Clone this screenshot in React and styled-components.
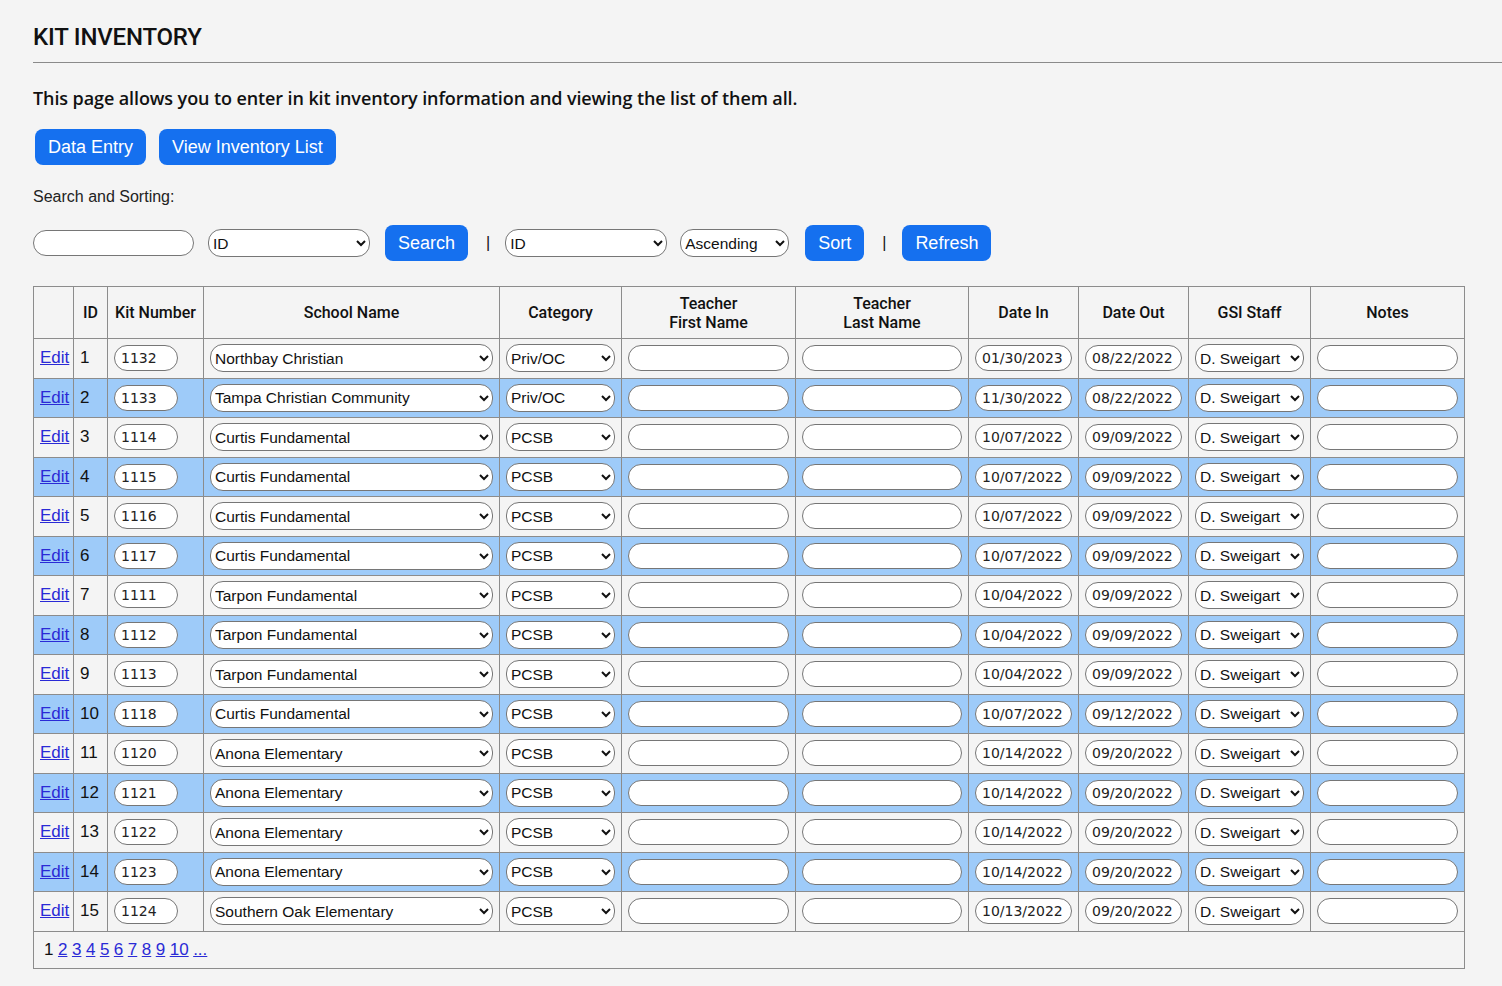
import styled, { createGlobalStyle } from 'styled-components'

const GlobalStyle = createGlobalStyle`
  html, body {
    margin: 0;
    background: #f4f4f4;
    color: #111;
    font-family: "Liberation Sans", Arial, sans-serif;
  }
`

const Page = styled.div`
  padding: 0 0 17px 33px;
`

const Title = styled.h1`
  margin: 0;
  padding-top: 22px;
  font-family: Roboto, "Liberation Sans", sans-serif;
  font-weight: 500;
  font-size: 24px;
  line-height: 30px;
  letter-spacing: -0.2px;
`

const Rule = styled.hr`
  margin: 10px 0 0;
  border: 0;
  border-top: 1px solid #8a8a8a;
`

const Intro = styled.p`
  margin: 22px 0 0;
  font-family: "Open Sans", "Liberation Sans", sans-serif;
  font-weight: 600;
  font-size: 18px;
  line-height: 26px;
  letter-spacing: -0.1px;
  color: #111;
`

const NavRow = styled.div`
  display: flex;
  gap: 13px;
  margin: 18px 0 0 2px;
`

const Button = styled.button`
  height: 36px;
  padding: 0 13px;
  border: 0;
  border-radius: 8px;
  background: #1570ef;
  color: #fff;
  font-family: "Liberation Sans", Arial, sans-serif;
  font-size: 18px;
  cursor: pointer;
`

const Label = styled.div`
  margin-top: 22px;
  font-size: 16px;
  line-height: 20px;
  color: #222;
`

const Controls = styled.div`
  display: flex;
  align-items: center;
  margin-top: 18px;
  height: 36px;
`

const Pipe = styled.span`
  font-size: 16px;
  margin: 0 ${(p) => p.$right}px 0 ${(p) => p.$left}px;
`

const pill = `
  box-sizing: border-box;
  height: 26px;
  border: 1px solid #767676;
  border-radius: 13px;
  background: #fff;
  color: #222;
`

const TextBox = styled.input`
  ${pill}
  width: ${(p) => p.$w || '100%'};
  margin-right: ${(p) => p.$mr || 0}px;
  padding: 0 6px;
  font-family: "DejaVu Sans", Verdana, sans-serif;
  font-size: 14px;
  outline: none;
`

const Select = styled.select`
  ${pill}
  height: 28px;
  width: ${(p) => p.$w || '100%'};
  margin-right: ${(p) => p.$mr || 0}px;
  padding: 0 2px 0 0;
  font-family: "Liberation Sans", Arial, sans-serif;
  font-size: 15.5px;
  color: #111;
`

const Table = styled.table`
  margin-top: 25px;
  width: 1431px;
  table-layout: fixed;
  border-collapse: collapse;
  border: 1px solid #8c8c8c;
`

const Th = styled.th`
  height: 51px;
  padding: 0 4px;
  border: 1px solid #8c8c8c;
  font-family: Roboto, "Liberation Sans", sans-serif;
  font-weight: 500;
  font-size: 16px;
  line-height: 19px;
  text-align: center;
  vertical-align: middle;
`

const Row = styled.tr`
  height: 39.5px;
  background: ${(p) => (p.$alt ? '#9ecbf9' : '#f4f4f4')};
`

const Td = styled.td`
  padding: 0 6px;
  border: 1px solid #8c8c8c;
  font-size: 17px;
  vertical-align: middle;
`

const EditLink = styled.a`
  color: #2a2ad6;
  text-decoration: underline;
  font-size: 17px;
`

const PagerCell = styled.td`
  height: 36px;
  padding: 0 10px;
  border: 1px solid #8c8c8c;
  font-size: 17px;
  background: #f4f4f4;
`

const PageLink = styled.a`
  color: #2a2ad6;
  text-decoration: underline;
  margin-left: 4.5px;
`

const schools = [
  'Northbay Christian',
  'Tampa Christian Community',
  'Curtis Fundamental',
  'Curtis Fundamental',
  'Curtis Fundamental',
  'Curtis Fundamental',
  'Tarpon Fundamental',
  'Tarpon Fundamental',
  'Tarpon Fundamental',
  'Curtis Fundamental',
  'Anona Elementary',
  'Anona Elementary',
  'Anona Elementary',
  'Anona Elementary',
  'Southern Oak Elementary',
]
const kits = ['1132', '1133', '1114', '1115', '1116', '1117', '1111', '1112', '1113', '1118', '1120', '1121', '1122', '1123', '1124']
const datesIn = ['01/30/2023', '11/30/2022', '10/07/2022', '10/07/2022', '10/07/2022', '10/07/2022', '10/04/2022', '10/04/2022', '10/04/2022', '10/07/2022', '10/14/2022', '10/14/2022', '10/14/2022', '10/14/2022', '10/13/2022']
const datesOut = ['08/22/2022', '08/22/2022', '09/09/2022', '09/09/2022', '09/09/2022', '09/09/2022', '09/09/2022', '09/09/2022', '09/09/2022', '09/12/2022', '09/20/2022', '09/20/2022', '09/20/2022', '09/20/2022', '09/20/2022']

const rows = kits.map((kit, i) => ({
  id: i + 1,
  kit,
  school: schools[i],
  category: i < 2 ? 'Priv/OC' : 'PCSB',
  dateIn: datesIn[i],
  dateOut: datesOut[i],
}))

const widths = [40, 34, 96, 296, 122, 174, 173, 110, 110, 122, 154]

export default function App() {
  return (
    <Page>
      <GlobalStyle />
      <Title>KIT INVENTORY</Title>
      <Rule />
      <Intro>This page allows you to enter in kit inventory information and viewing the list of them all.</Intro>
      <NavRow>
        <Button>Data Entry</Button>
        <Button>View Inventory List</Button>
      </NavRow>
      <Label>Search and Sorting:</Label>
      <Controls>
        <TextBox $w="161px" $mr={14} />
        <Select $w="162px" $mr={15} defaultValue="ID">
          <option>ID</option>
        </Select>
        <Button>Search</Button>
        <Pipe $left={18} $right={15}>|</Pipe>
        <Select $w="162px" $mr={13} defaultValue="ID">
          <option>ID</option>
        </Select>
        <Select $w="109px" $mr={16} defaultValue="Ascending">
          <option>Ascending</option>
          <option>Descending</option>
        </Select>
        <Button>Sort</Button>
        <Pipe $left={18} $right={16}>|</Pipe>
        <Button>Refresh</Button>
      </Controls>
      <Table>
        <colgroup>
          {widths.map((w, i) => (
            <col key={i} style={{ width: w }} />
          ))}
        </colgroup>
        <thead>
          <tr>
            <Th />
            <Th>ID</Th>
            <Th>Kit Number</Th>
            <Th>School Name</Th>
            <Th>Category</Th>
            <Th>Teacher<br />First Name</Th>
            <Th>Teacher<br />Last Name</Th>
            <Th>Date In</Th>
            <Th>Date Out</Th>
            <Th>GSI Staff</Th>
            <Th>Notes</Th>
          </tr>
        </thead>
        <tbody>
          {rows.map((r, i) => (
            <Row key={r.id} $alt={i % 2 === 1}>
              <Td><EditLink href="#">Edit</EditLink></Td>
              <Td>{r.id}</Td>
              <Td><TextBox $w="64px" defaultValue={r.kit} /></Td>
              <Td><Select defaultValue={r.school}><option>{r.school}</option></Select></Td>
              <Td><Select defaultValue={r.category}><option>{r.category}</option></Select></Td>
              <Td><TextBox /></Td>
              <Td><TextBox /></Td>
              <Td><TextBox defaultValue={r.dateIn} /></Td>
              <Td><TextBox defaultValue={r.dateOut} /></Td>
              <Td><Select defaultValue="D. Sweigart"><option>D. Sweigart</option></Select></Td>
              <Td><TextBox /></Td>
            </Row>
          ))}
          <tr>
            <PagerCell colSpan={11}>
              1
              {[2, 3, 4, 5, 6, 7, 8, 9, 10, '...'].map((n) => (
                <PageLink key={n} href="#">{n}</PageLink>
              ))}
            </PagerCell>
          </tr>
        </tbody>
      </Table>
    </Page>
  )
}
